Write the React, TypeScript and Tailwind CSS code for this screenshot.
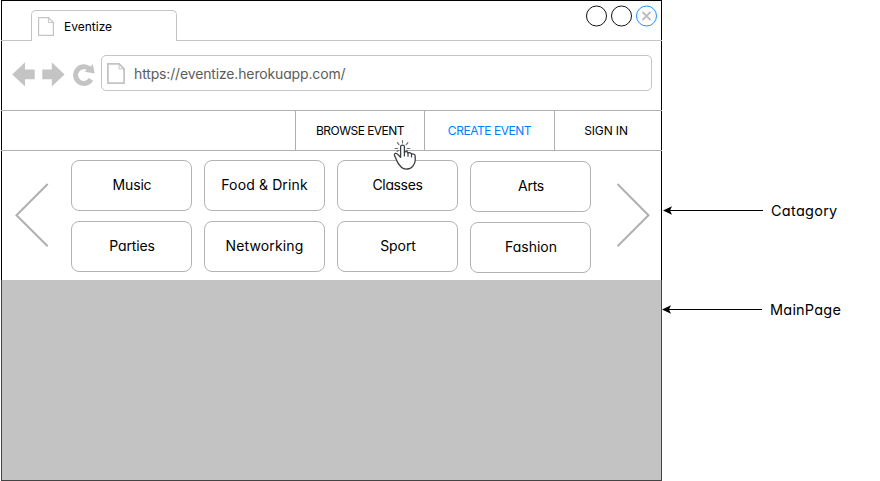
import type { ReactNode } from 'react';

function PageIcon({ width, height, stroke }: { width: number; height: number; stroke: number }) {
  const i = stroke / 2;
  const fold = 5;
  const r = width - i;
  const b = height - i;
  return (
    <svg width={width} height={height} fill="none" stroke="#c4c4c4" strokeWidth={stroke} className="block shrink-0">
      <path d={`M${i} ${i}H${r - fold}L${r} ${i + fold}V${b}H${i}Z`} />
      <path d={`M${r - fold} ${i}V${i + fold}H${r}`} strokeWidth={1} />
    </svg>
  );
}

function NavIcons() {
  return (
    <svg width="83" height="25" viewBox="12 62 83 25" className="block shrink-0">
      <g fill="#c4c4c4">
        <path d="M12.2 74.5L25 62.3V69.5H34.7V79.3H25V86.5Z" />
        <path d="M64.6 74.5L51.8 62.3V69.5H42.3V79.3H51.8V86.5Z" />
        <path d="M92.8 64L94.7 73.4L84.6 71.7L87.4 69.6L90 67.2Z" />
      </g>
      <path d="M89.4 68.9A8.3 8.3 0 1 0 91 79.4" fill="none" stroke="#c4c4c4" strokeWidth="5" />
    </svg>
  );
}

function WindowButtons() {
  return (
    <svg width="72" height="22" viewBox="586 4.5 72 22" fill="none" className="block">
      <circle cx="596.5" cy="15.5" r="10" stroke="#111" />
      <circle cx="621.5" cy="15.5" r="10" stroke="#111" />
      <circle cx="646.5" cy="15.5" r="10" stroke="#1f8fff" />
      <path d="M642.5 11.5L650.5 19.5M650.5 11.5L642.5 19.5" stroke="#bcbcbc" strokeWidth="1.8" />
    </svg>
  );
}

function Chevron({ right = false }: { right?: boolean }) {
  return (
    <svg width="35" height="64" fill="none" stroke="#b0b0b0" strokeWidth="2" className="block shrink-0">
      <path d={right ? 'M1.5 1L32.5 32.2L1.5 63.2' : 'M33.7 1L2.5 32.2L33.7 63.2'} />
    </svg>
  );
}

function HandCursor() {
  return (
    <svg width="26" height="32" viewBox="0 0 26 32" fill="none" strokeLinecap="round" strokeLinejoin="round" className="absolute left-[390px] top-[138px]">
      <path
        d="M8.6 7.6C8.6 5.5 12.4 5.5 12.4 7.6V13.2C13.6 12.2 15.6 12.7 16 14C17.4 13.2 19.2 13.9 19.5 15.2C21.2 14.5 23.2 15.4 23.2 17.2V21.5C23.2 24.6 21.4 26 20.3 27.7C18.6 30.5 11.8 30.9 9.4 28.2C7.2 26 5.6 24.4 4.6 21.2C4 19.2 2.9 17.6 2.4 16.1C2.1 14.3 4.1 13.8 5.2 14.9L8.6 18.2Z"
        fill="#fff"
        stroke="#3a3d42"
        strokeWidth="1.3"
      />
      <path d="M12.4 13.2V17M16 14V17.3M19.5 15.2V18" stroke="#3a3d42" strokeWidth="1.2" />
      <path d="M10.5 1.6V4M5.4 3.6L7 5.6M15.9 3.6L14.2 5.6M3 9.5H5.6M15.2 9.5H17.8M5.2 12.3L6.4 11.4M14.6 11.3L15.4 11.8" stroke="#6b6e72" strokeWidth="1.2" />
    </svg>
  );
}

function Category({ children, className = '' }: { children: ReactNode; className?: string }) {
  return (
    <div className={`flex h-[51px] w-[121px] items-center justify-center rounded-lg border border-[#b3b3b3] bg-white pb-0.5 text-sm ${className}`}>
      {children}
    </div>
  );
}

function Note({ label, className }: { label: string; className: string }) {
  return (
    <div className={`flex h-5 items-center text-[14.5px] ${className}`}>
      <svg width="100" height="9" className="block shrink-0">
        <path d="M5 4.5H100" stroke="#000" />
        <path d="M0 4.5L9 0.2L7 4.5L9 8.8Z" />
      </svg>
      <span className="pt-0.5">{label}</span>
    </div>
  );
}

export default function App() {
  return (
    <div className="flex h-[481px] w-[880px] overflow-hidden bg-white pl-px font-['Inter',sans-serif] font-[385] text-black [font-feature-settings:'cv11']">
      <main className="relative flex h-[481px] w-[661px] shrink-0 flex-col border border-black">
        <header className="-mx-px flex h-10 shrink-0">
          <div className="w-[30px] border-b border-[#c4c4c4]" />
          <div className="mt-[9px] flex w-[146px] items-start rounded-t-[5px] border border-b-0 border-[#c4c4c4] pl-1.5 pt-1.5">
            <PageIcon width={16} height={19} stroke={1.2} />
            <span className="ml-2.5 mt-px text-xs leading-[18px]">Eventize</span>
          </div>
          <div className="flex flex-1 justify-end border-b border-[#c4c4c4] pr-1 pt-[3.5px]">
            <WindowButtons />
          </div>
        </header>

        <div className="flex h-[69px] shrink-0 items-start pl-2.5 pt-3.5">
          <div className="mt-[7px]">
            <NavIcons />
          </div>
          <div className="ml-1.5 flex h-9 w-[551px] items-center rounded-[5px] border border-[#c4c4c4] pl-[5px] text-sm text-[#5c5c5c]">
            <PageIcon width={18} height={21} stroke={1.8} />
            <span className="ml-[9px] mt-0.5 tracking-[-0.15px]">https://eventize.herokuapp.com/</span>
          </div>
        </div>

        <nav className="-mx-px flex h-[41px] shrink-0 justify-end border-y border-[#b0b0b0] text-xs">
          <div className="flex w-[129px] items-center justify-center border-l border-[#b0b0b0] tracking-[-0.54px]">BROWSE EVENT</div>
          <div className="flex w-[130px] items-center justify-center border-l border-[#b0b0b0] tracking-[-0.46px] text-[#0080ff]">CREATE EVENT</div>
          <div className="flex w-[108px] items-center justify-center border-l border-[#b0b0b0] pr-[5px] tracking-[-0.14px]">SIGN IN</div>
        </nav>

        <section className="flex h-[129px] shrink-0 items-start pl-3 pt-[9px]">
          <div className="mt-[23px]">
            <Chevron />
          </div>
          <div className="ml-[22px] flex gap-3">
            <div className="flex flex-col gap-2.5">
              <Category className="pl-px tracking-[-0.15px]">Music</Category>
              <Category className="pl-px tracking-[-0.15px]">Parties</Category>
            </div>
            <div className="flex flex-col gap-2.5">
              <Category className="tracking-[0.13px]">Food &amp; Drink</Category>
              <Category className="tracking-[0.13px]">Networking</Category>
            </div>
            <div className="flex flex-col gap-2.5">
              <Category className="tracking-[-0.36px]">Classes</Category>
              <Category className="pl-px tracking-[-0.1px]">Sport</Category>
            </div>
            <div className="mt-px flex flex-col gap-2.5">
              <Category className="pl-px tracking-[-0.3px]">Arts</Category>
              <Category className="pl-px">Fashion</Category>
            </div>
          </div>
          <div className="ml-[25px] mt-[23px]">
            <Chevron right />
          </div>
        </section>

        <section className="-mx-px -mb-px flex-1 border border-t-0 border-[#444] bg-[#c3c3c3]" />
        <HandCursor />
      </main>

      <aside className="flex flex-col pt-[200px]">
        <Note label="Catagory" className="gap-2 pl-px tracking-[0.27px]" />
        <Note label="MainPage" className="mt-[79px] gap-2 tracking-[0.2px]" />
      </aside>
    </div>
  );
}
